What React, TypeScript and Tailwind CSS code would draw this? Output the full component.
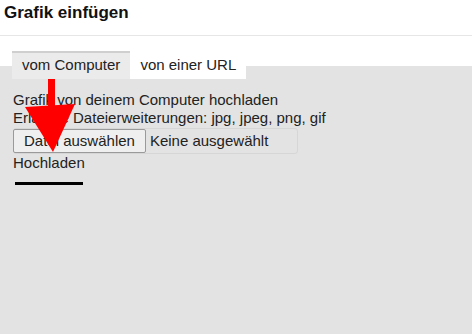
export default function App() {
  return (
    <div className="relative w-[472px] h-[334px] bg-white text-[#222] font-['Liberation_Sans',Arial,sans-serif] flex flex-col overflow-hidden">
      <div className="h-[36px] shrink-0 border-b border-[#e6e6e6] pl-[4px] pt-[3px] text-[17px] leading-[20px] font-bold text-[#111]">
        Grafik einfügen
      </div>

      <div className="relative z-10 mt-[15px] pl-[12px] flex text-[15px] leading-[17px]">
        <div className="h-[28px] px-[10px] pt-[3px] bg-[#ebebeb] border-t-2 border-[#cfcfcf]">vom Computer</div>
        <div className="h-[28px] px-[10px] pt-[3px] bg-white border-t-2 border-white">von einer URL</div>
      </div>

      <div className="flex-1 -mt-[13px] bg-[#e3e3e3] pt-[25px] px-[13px] text-[15px] leading-[18px]">
        <p>Grafik von deinem Computer hochladen</p>
        <p>Erlaubte Dateierweiterungen: jpg, jpeg, png, gif</p>
        <div className="mt-px flex items-center w-[285px] h-[26px] border border-[#d6d6d6] rounded-[3px]">
          <div className="-ml-px h-[24px] flex items-center px-[10px] bg-[#efefef] border border-[#9a9a9a] rounded-[2px]">
            Datei auswählen
          </div>
          <span className="ml-[4px]">Keine ausgewählt</span>
        </div>
        <p>Hochladen</p>
        <div className="mt-[10px] ml-[2px] w-[68px] h-[3px] bg-black" />
      </div>

      {/* red annotation arrow */}
      <svg className="absolute left-0 top-0 pointer-events-none" width="472" height="334" viewBox="0 0 472 334">
        <path d="M48 76 Q48 72 51.5 72 Q55 72 55 76 L55 110 L48 110 Z" fill="#ff0000" />
        <polygon points="25,107 75,104 53,152" fill="#ff0000" />
      </svg>
    </div>
  );
}
